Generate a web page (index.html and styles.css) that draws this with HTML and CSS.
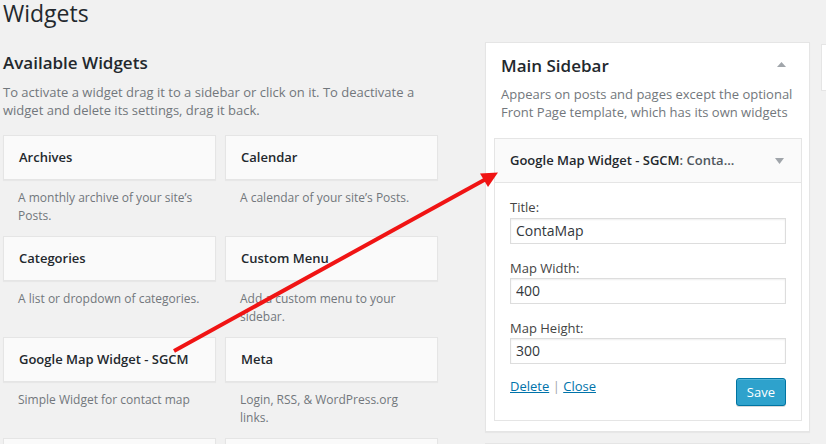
FILE: index.html
```html
<!DOCTYPE html>
<html>
<head>
<meta charset="utf-8">
<link rel="stylesheet" href="styles.css">
</head>
<body>
<div class="wrap">
  <h1 class="page-title">Widgets</h1>
  <div class="cols">
    <section class="available">
      <h2 class="section-title">Available Widgets</h2>
      <p class="section-desc">To activate a widget drag it to a sidebar or click on it. To deactivate a widget and delete its settings, drag it back.</p>
      <div class="widget-grid">
        <div class="widget">
          <div class="widget-top"><h3 class="widget-title">Archives</h3></div>
          <div class="widget-desc">A monthly archive of your site’s Posts.</div>
        </div>
        <div class="widget">
          <div class="widget-top"><h3 class="widget-title">Calendar</h3></div>
          <div class="widget-desc">A calendar of your site’s Posts.</div>
        </div>
        <div class="widget">
          <div class="widget-top"><h3 class="widget-title">Categories</h3></div>
          <div class="widget-desc">A list or dropdown of categories.</div>
        </div>
        <div class="widget">
          <div class="widget-top"><h3 class="widget-title">Custom Menu</h3></div>
          <div class="widget-desc">Add a custom menu to your sidebar.</div>
        </div>
        <div class="widget">
          <div class="widget-top"><h3 class="widget-title">Google Map Widget - SGCM</h3></div>
          <div class="widget-desc">Simple Widget for contact map</div>
        </div>
        <div class="widget">
          <div class="widget-top"><h3 class="widget-title">Meta</h3></div>
          <div class="widget-desc">Login, RSS, &amp; WordPress.org links.</div>
        </div>
        <div class="widget">
          <div class="widget-top widget-top-empty"></div>
        </div>
        <div class="widget">
          <div class="widget-top widget-top-empty"></div>
        </div>
      </div>
    </section>

    <section class="sidebars">
      <div class="sidebar">
        <div class="sidebar-head">
          <h2 class="sidebar-name">Main Sidebar</h2>
          <svg class="toggle" width="9" height="5" viewBox="0 0 9 5"><path d="M4.5 0 L9 5 L0 5 Z" fill="#a0a5aa"/></svg>
        </div>
        <p class="sidebar-desc">Appears on posts and pages except the optional Front Page template, which has its own widgets</p>
        <div class="sb-widget">
          <div class="sb-widget-top">
            <h3 class="widget-title">Google Map Widget - SGCM<span class="in-title">: Conta...</span></h3>
            <svg class="toggle-down" width="9" height="6" viewBox="0 0 9 6"><path d="M0 0 L9 0 L4.5 6 Z" fill="#a0a5aa"/></svg>
          </div>
          <div class="sb-widget-inside">
            <div class="field">
              <label class="field-label">Title:</label>
              <input class="field-input" type="text" value="ContaMap">
            </div>
            <div class="field">
              <label class="field-label">Map Width:</label>
              <input class="field-input" type="text" value="400">
            </div>
            <div class="field">
              <label class="field-label">Map Height:</label>
              <input class="field-input" type="text" value="300">
            </div>
            <div class="actions">
              <div class="links"><a class="link" href="#">Delete</a> <span class="sep">|</span> <a class="link" href="#">Close</a></div>
              <button class="save" type="button">Save</button>
            </div>
          </div>
        </div>
      </div>
      <div class="sidebar sidebar-next"></div>
    </section>

    <section class="sidebars-extra">
      <div class="stub"></div>
    </section>
  </div>

  <svg class="arrow" width="826" height="444" viewBox="0 0 826 444">
    <line x1="174" y1="351" x2="486" y2="179" stroke="#f01414" stroke-width="4" stroke-linecap="butt"/>
    <polygon points="498,172.5 480,173.5 488,187" fill="#f01414"/>
  </svg>
</div>
</body>
</html>
```

FILE: styles.css
```css
html, body {
  margin: 0;
  padding: 0;
}
body {
  background: #f1f1f1;
  font-family: "Open Sans", sans-serif;
  color: #444;
  font-size: 13px;
  width: 826px;
  height: 444px;
  overflow: hidden;
  position: relative;
}
.wrap {
  padding-left: 3px;
}
.page-title {
  margin: 0;
  font-size: 23px;
  font-weight: 400;
  line-height: 26px;
  color: #23282d;
}
.cols {
  display: flex;
  align-items: flex-start;
}
.available {
  width: 435px;
  flex: none;
}
.section-title {
  margin: 25px 0 0;
  font-size: 17px;
  font-weight: 600;
  line-height: 1.4;
  color: #23282d;
}
.section-desc {
  margin: 8px 0 16px;
  line-height: 1.4;
  color: #72777c;
}
.widget-grid {
  display: grid;
  grid-template-columns: 213px 213px;
  column-gap: 9px;
  grid-auto-rows: 101px;
}
.widget-top {
  background: #fafafa;
  border: 1px solid #e5e5e5;
  box-shadow: 0 1px 1px rgba(0,0,0,.04);
  padding: 15px;
}
.widget-top-empty {
  height: 13px;
}
.widget-title {
  margin: 0;
  font-size: 13px;
  font-weight: 600;
  line-height: 1;
  color: #23282d;
  white-space: nowrap;
}
.widget-desc {
  padding: 9px 15px 0;
  font-size: 12px;
  line-height: 18px;
  color: #72777c;
}
.sidebars {
  width: 325px;
  flex: none;
  margin-left: 47px;
  margin-top: 16px;
}
.sidebar {
  background: #fff;
  border: 1px solid #e5e5e5;
  box-shadow: 0 1px 1px rgba(0,0,0,.04);
  padding-bottom: 10px;
}
.sidebar-head {
  display: flex;
  align-items: center;
  justify-content: space-between;
  padding: 10px 23px 0 15px;
}
.sidebar-name {
  margin: 0;
  font-size: 17px;
  font-weight: 600;
  line-height: 25px;
  color: #23282d;
}
.toggle {
  margin-top: -2px;
}
.sidebar-desc {
  margin: 7px 0 17px;
  padding: 0 10px 0 15px;
  line-height: 1.4;
  color: #72777c;
}
.sb-widget {
  margin: 0 7px 0 8px;
}
.sb-widget-top {
  display: flex;
  align-items: center;
  justify-content: space-between;
  background: #fafafa;
  border: 1px solid #e5e5e5;
  padding: 15px 17px 15px 15px;
}
.in-title {
  color: #50575e;
}
.sb-widget-inside {
  background: #fff;
  border: 1px solid #e5e5e5;
  border-top: none;
  padding: 15px 15px 14px;
}
.field {
  margin-bottom: 15px;
}
.field-label {
  display: block;
  line-height: 1.4;
  color: #444;
}
.field-input {
  display: block;
  box-sizing: border-box;
  width: 100%;
  height: 26px;
  margin: 1px 0 0;
  padding: 0 5px;
  border: 1px solid #ddd;
  box-shadow: inset 0 1px 2px rgba(0,0,0,.07);
  background: #fff;
  color: #32373c;
  font-family: "Open Sans", sans-serif;
  font-size: 14px;
  outline: none;
}
.actions {
  display: flex;
  justify-content: space-between;
  align-items: flex-start;
  margin-top: -1px;
}
.links {
  line-height: 1.4;
  margin-top: -1px;
}
.link {
  color: #0073aa;
  text-decoration: underline;
}
.sep {
  color: #a0a5aa;
}
.save {
  height: 28px;
  padding: 0 10px 1px;
  border: 1px solid #0074a2;
  border-radius: 3px;
  background: #2ea2cc;
  box-shadow: inset 0 1px 0 rgba(120,200,230,.5), 0 1px 0 rgba(0,0,0,.15);
  color: #fff;
  font-family: "Open Sans", sans-serif;
  font-size: 13px;
  line-height: 26px;
}
.sidebar-next {
  margin-top: 11px;
  height: 60px;
}
.sidebars-extra {
  margin-left: 11px;
  margin-top: 18px;
  flex: none;
  width: 60px;
}
.stub {
  height: 45px;
  background: #fff;
  border: 1px solid #e5e5e5;
}
.arrow {
  position: absolute;
  left: 0;
  top: 0;
  pointer-events: none;
}
```
